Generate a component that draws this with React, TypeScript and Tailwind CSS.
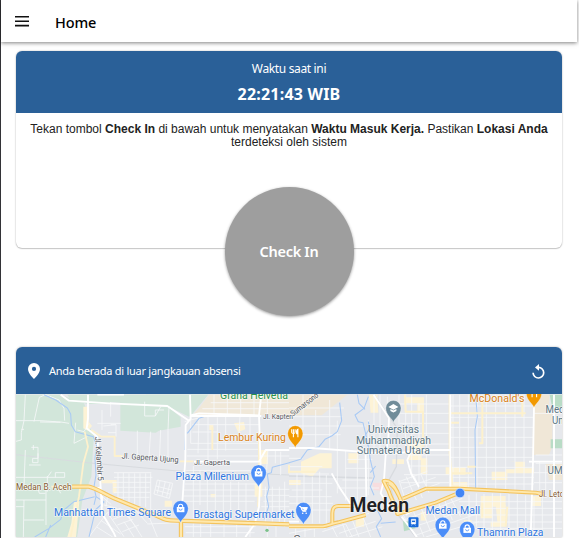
import React from "react";

const west = {
  greens: [
    "M6 14H140L210 40L222 70L215 100L240 130L232 260L205 330L190 441H6Z",
    "M160 14H582L555 45L525 80L460 48L290 36V100H250L222 85V42L170 30Z",
    "M319 36L460 48L500 82V110L435 122L425 128L319 122Z",
    "M395 14H582L530 78L440 40Z",
  ],
  lands: [
    "M222 42H292V110H252L222 92Z",
    "M243 120L258 130L262 300L270 441H190L208 330L240 262Z",
  ],
  sand: ["M585 14H826V76H535L555 55Z"],
  cream: [
    "M208 50H224V95L234 108L222 122L208 115Z",
    "M262 270H308V310H296V280H262Z",
    "M180 335H196L186 441H160L172 400Z",
    "M660 100L690 96L694 118L672 126Z",
    "M735 180H762V222H738Z",
    "M722 280H745V320H722Z",
    "M586 105H598V120H586ZM452 332H474V350H452ZM590 312H606V322H590Z",
  ],
  minor: [
    "M6 92H78L140 96L165 100M34 14L30 92L22 128V150L6 154M30 118L22 118M60 95L76 22L95 14M78 96L140 97M95 14L135 30L150 55L152 92",
    "M52 172H72V205H56V218H72V190M58 180V165M45 225H80M34 180L30 290M6 262H100L112 245M100 258V305M100 262H152V248H124V262M30 330H96M96 292V405M6 330H30L28 441M6 350H30M30 390H90",
    "M70 290L76 310H94M130 290L140 310M264 60V120M290 36V80M290 104H306V140M268 108L306 104M306 128H282",
    "M392 35V78H424V60H450M424 78L440 50M465 50L462 122M440 120L436 215M462 122V215M512 95L560 82M320 100H250M370 122V200M410 125L405 200",
    "M300 248H412M300 262H415M295 277H410M298 292H406M300 307H408M308 322H406M312 248V325M328 248V330M345 250V336M362 250V342M378 250V348M395 250V352M410 250V358",
    "M430 270L476 280L466 325L420 312ZM438 272L430 310M454 275L444 318M468 280L458 320M426 288L472 300M424 300L468 312",
    "M225 441L280 368L330 440M248 411L296 441M262 392L320 432M280 368L320 355L370 415M296 388L340 372M310 405L356 388M325 425L375 405M340 372L384 441M356 350L400 400M330 395L360 441M405 380L430 441M400 402L495 398",
    "M530 76V160M555 82L552 190M582 80V215M610 82V208M635 80V182M678 80L674 150M708 80V152M535 104H735M535 126H610M530 160H738M520 178H735M518 198H826M762 178L758 240M784 180V220M800 185V255",
    "M515 242H720M512 282H728M510 300H722M508 318H725M507 334H722M538 228V390M558 240V345M580 270V385M604 275V390M628 280V385M650 275V388M674 275V385M696 280V388",
    "M742 298H826M750 316H826M748 334H826M742 350H826M754 290V400M775 290V400M796 290V400M812 275V410M512 410H725M515 428H722M538 400V441M560 400V441M590 400V441M630 400V441M668 400V441M708 400V441M760 410V441M786 410V441",
    "M600 14V70M640 14V74M680 20V75M720 14V76M760 22V76M590 38H826M565 56H826",
    "M270 345L310 355M265 320L292 344M282 310L276 350M225 100L210 125L190 120M185 98L180 160M220 140L180 160",
  ],
  rivers: [
    "M90 14L125 30L160 54L170 72L172 105L184 125L238 140L248 168L243 205L246 255L240 290L246 320L240 345",
    "M62 441L105 415L140 388L150 360L180 335L242 320M95 441L110 405M246 320L270 336L244 360L235 400L225 441",
    "M520 130L555 85L582 76M510 260L508 300M515 125L512 180M826 218L775 232L772 248L760 252L765 292L758 320L764 350L750 388",
  ],
  cream2: [
    "M232 120L262 140H302V198H326M112 290H174M212 125L222 170L208 220L195 320L180 390L170 441M498 214H538M595 112V180M735 122V252M735 275L732 350",
  ],
  major: [
    "M140 14L165 32L285 40L460 48L525 92M528 14L530 86L515 105L514 210L504 352M250 14H330M528 78H742M222 14V85L218 115L250 140L260 292L264 370L300 430L305 441",
    "M530 76L555 70L735 76L742 14M735 76L740 230L735 350L722 402L694 441M240 300L258 292M540 215H735L755 180H826M264 318L264 350",
  ],
  highways: [
    "M174 290H224C245 294 268 310 300 325L430 378C447 386 454 392 486 392L826 403",
    "M501 394V441",
  ],
};

const east = {
  sand: [
    "M0 14H175L98 76H0Z",
    "M734 14H782L778 68H790V170L780 195H730Z",
    "M770 222H819V270H780Z",
  ],
  greens: ["M782 14H819V55H790Z", "M785 148H819V175H785Z", "M342 394H370L380 415L345 424Z"],
  cream: [
    "M36 215L92 190H128V235H92L70 260L36 250Z",
    "M240 14H265L268 68H245Z",
    "M350 22H405V70H385V40H345Z",
    "M355 150H398V205H415V252H395V210H358Z",
    "M178 190H208V220H178Z",
    "M660 215H708V235H735V250H650V238H678V216Z",
    "M608 245H655V270H608Z",
    "M575 318H650V350H610V385H575Z",
    "M620 345H650V410H605V395H625Z",
    "M470 232H530V254H470Z",
    "M395 365H412V392H395Z",
    "M200 380H225V410H200ZM0 270H35V285H0ZM310 208H345V222H310Z",
    "M525 390H548V410H525ZM730 318H756V348H730ZM485 276H535V294H485Z",
  ],
  minor: [
    "M0 54H165M0 80H160M0 108H230M0 134H155M42 14V120M80 60V170M122 30V178M145 92V310M170 180V332M205 180V342M238 90V315M175 208H250M170 235H248M160 270H252M145 294H270",
    "M0 205H40M0 230H100M0 252H120M0 280H130M8 300H100M0 320H128M0 340H132M0 360H130M24 250V390M45 250V350M70 260V400M92 245V400M112 255V402",
    "M255 14V180M273 14V185M295 20V80M330 14V104M350 14V190M368 14V265M390 40V280M412 14V300M330 42H482M332 70H482M332 100H482M368 130H482M364 162H482M365 195H482M358 228H482M345 254H480M335 278H480",
    "M492 14V278M512 14V292M538 14V300M564 14V302M592 14V305M620 14V306M650 14V308M678 14V310M705 14V310M482 48H735M482 82H735M482 112H735M482 142H735M482 172H735M482 202H735M482 232H735M482 262H735M490 282H735",
    "M735 70H819M740 195H819M740 220H819M735 248H819M735 278H819M795 70V441M752 215V300M770 225V300",
    "M330 270L352 340M352 260L382 330M374 252L400 324M396 254L420 308M330 275L415 244M342 296L440 262M350 315L452 280",
    "M340 370L380 441M370 356L405 441M395 350L425 425M420 340L450 410M445 330L475 400M465 325L490 390M480 315L515 380M345 390L520 325M360 415L545 355M382 435L560 373M410 441L570 395",
    "M540 315V400M562 310V410M585 312V441M610 310V441M635 310V441M660 312V441M685 312V441M710 316V441M735 320V441M760 320V441M510 335H819M520 355H819M535 375H819M535 396H819M550 415H819",
    "M0 430L110 410L240 370M130 412L145 441M160 400L175 441M190 390L210 441M220 376L245 441M0 415H110M20 410V441M48 410V441M76 410V441M150 430L260 394M180 441L280 410M100 425L170 402L190 441",
  ],
  rivers: [
    "M152 38L158 92L145 125L128 138L108 148L90 170L55 180L35 208L0 218M238 20L225 55L198 75L208 95L222 98L238 165L244 210L256 260L244 290L255 316",
    "M205 14L210 40L228 58M238 95L242 115L226 140L238 170M244 248L260 228M560 14L565 80L558 120L560 300M265 360L278 386L262 410L275 441M275 400L320 396",
  ],
  cream2: [
    "M482 14V190L490 285M482 70H710M482 98H510M580 14V160H570M700 14V80M0 245H80M535 230H560M348 14L350 65H402V170M0 225V250M655 350L650 410M490 250H550M580 340V380",
  ],
  major: [
    "M0 174H70L282 190H330L380 180H482M254 14L300 84L298 145L290 195L285 270M735 50L732 215L725 441M795 14V441M338 380L384 441M128 250L155 298L185 342M484 14V295",
    "M0 395H30M350 374L371 362M370 175L355 210L366 250L390 290M720 215H819M285 270L275 310L300 350M230 195L232 320",
  ],
  highways: [
    "M0 409H102C120 407 122 402 148 397L230 375M130 402V370Q130 348 148 348H195",
    "M325 372L440 338L512 308M342 326L412 296H512L740 308L765 312",
    "M284 273C300 269 315 284 325 305L338 337L325 372C323 347 305 326 300 305ZM300 280C318 290 323 305 336 330",
  ],
};

const Menu = () => (
  <svg className="block size-4" viewBox="0 0 16 16" fill="#111">
    <path d="M1 2h14v1.6H1zM1 6.4h14V8H1zM1 10.8h14v1.6H1z" />
  </svg>
);

type PinProps = { x: number; y: number; color: string; kind: "bag" | "cart" | "food" | "school" };

const MapPin = ({ x, y, color, kind }: PinProps) => (
  <g transform={`translate(${x} ${y})`}>
    <path
      d="M0 14.5C-.8 10.5-7.6 7.5-7.6 0a7.6 7.6 0 0 1 15.2 0C7.6 7.5.8 10.5 0 14.5Z"
      fill={color}
      stroke="#fff"
      strokeOpacity=".55"
      strokeWidth=".5"
    />
    {kind === "bag" && (
      <g>
        <path d="M-3.8-1.3h7.6v5.2h-7.6z" fill="#fff" />
        <path d="M-2.1-1v-1a2.1 2.1 0 0 1 4.2 0v1" fill="none" stroke="#fff" strokeWidth="1.1" />
        <path d="M-1.6.3a1.6 1.6 0 0 0 3.2 0" fill="none" stroke={color} strokeWidth=".8" />
      </g>
    )}
    {kind === "cart" && (
      <g>
        <path d="M-4.3-3.5h1.6l2 4.8h3.6M-2.4-2.5h6.4L2.9.2h-4.3z" fill="#fff" stroke="#fff" strokeWidth=".9" />
        <circle cx="-.7" cy="3.2" r=".8" fill="#fff" />
        <circle cx="2.8" cy="3.2" r=".8" fill="#fff" />
      </g>
    )}
    {kind === "food" && (
      <g fill="none" stroke="#fff">
        <path d="M-3.6-4v2.8q0 1.4 1.7 1.4t1.7-1.4V-4M-1.9-4v8" strokeWidth="1.1" />
        <path d="M2.6 4v-8C1.2-3.5 1.1-1.5 1.4.3h1.2" fill="#fff" strokeWidth="1.1" />
      </g>
    )}
    {kind === "school" && (
      <path d="M-5-1.1 0-3.9l5 2.8L0 1.7zM-3 .9 0 2.6 3 .9v2L0 4.4l-3-1.5z" fill="#fff" />
    )}
  </g>
);

type LabelProps = {
  x: number;
  y: number;
  w: number;
  size: number;
  color: string;
  children: string;
  rotate?: number;
  weight?: number;
};

const Label = ({ x, y, w, size, color, children, rotate = 0, weight = 400 }: LabelProps) => (
  <text
    x={x}
    y={y}
    fontSize={size}
    fontWeight={weight}
    fill={color}
    textLength={w}
    lengthAdjust="spacingAndGlyphs"
    transform={`rotate(${rotate} ${x} ${y})`}
    stroke="#fff"
    strokeWidth="1.6"
    strokeOpacity=".6"
    strokeLinejoin="round"
    paintOrder="stroke"
  >
    {children}
  </text>
);

const Lines = ({ paths, color, width }: { paths: string[]; color: string; width: number }) => (
  <g fill="none" stroke={color} strokeWidth={width} strokeLinejoin="round">
    {paths.map((d) => (
      <path key={d} d={d} />
    ))}
  </g>
);

const Areas = ({ paths, color }: { paths: string[]; color: string }) => (
  <g fill={color}>
    {paths.map((d) => (
      <path key={d} d={d} />
    ))}
  </g>
);

const CityMap = () => (
  <svg className="block h-[143px] w-full font-[Roboto,sans-serif]" viewBox="16 394 546 143">
    <path d="M16 394h546v143H16z" fill="#e6e8ec" />
    <g transform="translate(14 390) scale(.33333)">
      <Areas paths={west.greens} color="#d2e6da" />
      <Areas paths={west.lands} color="#e6e8ec" />
      <Areas paths={west.sand} color="#f0e8d9" />
      <Areas paths={west.cream} color="#fdf3d6" />
      <path d="M6 194L240 220L480 242L826 255" fill="none" stroke="#d8dbdf" strokeWidth="3" />
      <Lines paths={west.minor} color="#f6f8f9" width={2.5} />
      <Lines paths={west.rivers} color="#a9caf5" width={3.2} />
      <Lines paths={west.cream2} color="#fdf1cd" width={5.5} />
      <Lines paths={west.major} color="#fff" width={5.5} />
      <Lines paths={west.highways} color="#f4c35d" width={13} />
      <Lines paths={west.highways} color="#ffe8ab" width={6.5} />
      <circle cx="759" cy="421" r="5" fill="#7bc18a" />
    </g>
    <g transform="translate(289 390) scale(.33333)">
      <Areas paths={east.sand} color="#f0e7d7" />
      <Areas paths={east.cream} color="#fdf3d6" />
      <Areas paths={["M250 278L285 278L282 302L255 300Z"]} color="#f7dddf" />
      <path d="M0 258L250 264M255 14L325 115L322 230L300 270L325 372L380 441" fill="none" stroke="#d8dbdf" strokeWidth="4" />
      <Lines paths={east.minor} color="#f6f8f9" width={2.5} />
      <Areas paths={east.greens} color="#b9dcc6" />
      <Lines paths={east.rivers} color="#a9caf5" width={3.2} />
      <Lines paths={east.cream2} color="#fdf1cd" width={6} />
      <Lines paths={east.major} color="#fff" width={5.5} />
      <Lines paths={east.highways} color="#f4c35d" width={12} />
      <Lines paths={east.highways} color="#ffe8ab" width={5.5} />
    </g>

    <Label x={220} y={398.5} w={68} size={11} color="#28934b">Graha Helvetia</Label>
    <Label x={263} y={419.3} w={30} size={8} color="#55585d">Jl. Kapten</Label>
    <Label x={293} y={416.5} w={33} size={8} color="#55585d" rotate={-38}>Sumarsono</Label>
    <Label x={218} y={441.3} w={68} size={11} color="#d98218">Lembur Kuring</Label>
    <Label x={469.5} y={402} w={55} size={11} color="#d98218">McDonald's</Label>
    <Label x={368} y={433} w={51} size={10.5} color="#5b7683">Universitas</Label>
    <Label x={356} y={443.6} w={75} size={10.5} color="#5b7683">Muhammadiyah</Label>
    <Label x={357} y={454} w={73} size={10.5} color="#5b7683">Sumatera Utara</Label>
    <Label x={545.5} y={413} w={19} size={10.5} color="#5b7683">Med</Label>
    <Label x={552} y={423.5} w={14} size={10.5} color="#5b7683">Uni</Label>
    <Label x={547.5} y={473.5} w={15} size={10.5} color="#5b7683">UM</Label>
    <Label x={121.5} y={458.5} w={57} size={8} color="#55585d" rotate={4}>Jl. Gaperta Ujung</Label>
    <Label x={194} y={464.5} w={36} size={8} color="#55585d">Jl. Gaperta</Label>
    <Label x={95} y={437} w={44} size={8} color="#55585d" rotate={86}>Jl. Kelambir 5</Label>
    <Label x={16} y={490.3} w={55.5} size={8.5} color="#885c31">Medan B. Aceh</Label>
    <Label x={175.5} y={480} w={73.5} size={11} color="#2f76df">Plaza Millenium</Label>
    <Label x={54} y={515.8} w={117} size={11} color="#2f76df">Manhattan Times Square</Label>
    <Label x={193.5} y={517.7} w={101} size={11} color="#2f76df">Brastagi Supermarket</Label>
    <Label x={425.5} y={513.7} w={54.5} size={11} color="#2f76df">Medan Mall</Label>
    <Label x={477} y={536} w={66.5} size={11} color="#2f76df">Thamrin Plaza</Label>
    <Label x={349.5} y={511.5} w={59.5} size={20} weight={600} color="#202124">Medan</Label>
    <Label x={539} y={496.5} w={25} size={8.5} color="#885c31">Jl. Letd</Label>
    <Label x={293.5} y={543} w={7} size={10} color="#55585d">S</Label>

    <MapPin x={295.3} y={433.3} color="#f29900" kind="food" />
    <MapPin x={534} y={393.2} color="#f29900" kind="food" />
    <MapPin x={393.4} y={408} color="#718c99" kind="school" />
    <MapPin x={258.6} y={472.5} color="#4b8df8" kind="bag" />
    <MapPin x={180.6} y={508.3} color="#4b8df8" kind="bag" />
    <MapPin x={303.4} y={510} color="#4b8df8" kind="cart" />
    <MapPin x={442.8} y={524.8} color="#4b8df8" kind="bag" />
    <MapPin x={467.2} y={529} color="#4b8df8" kind="bag" />
    <rect x="408.5" y="517.2" width="10" height="10" rx="1.2" fill="#1769da" />
    <path d="M411.3 519.2h4.4v4.7h-4.4zM411.4 525.6l1-1.4M415.6 525.6l-1-1.4" fill="#fff" stroke="#fff" strokeWidth=".5" />
    <path d="M412 520.6h3v1.5h-3z" fill="#1769da" />
    <circle cx="460" cy="493" r="4.8" fill="#4285f4" stroke="#e8f0fe" strokeWidth=".7" />
  </svg>
);

export default function App() {
  return (
    <div className="h-[538px] w-[579px] overflow-hidden bg-white font-['Noto_Sans',sans-serif] text-white">
      <div className="h-full w-[577px] border-l border-[#333337]">
        <header className="flex h-[42px] items-center bg-white pl-[13px] pt-[2px] text-black shadow-[0_1px_4px_rgba(0,0,0,.5)]">
          <Menu />
          <h1 className="ml-[25px] text-[14.5px] font-medium leading-5 tracking-[-0.15px]">Home</h1>
        </header>
        <main className="w-[561px] pl-[15px] pt-[9px]">
          <section className="h-[197px] rounded-[6px] bg-white shadow-[0_0_2px_rgba(0,0,0,.28),0_1px_1px_rgba(0,0,0,.16)]">
            <div className="flex h-[62px] flex-col items-center rounded-t-[6px] bg-[#2a6098] pt-[10px]">
              <p className="text-xs leading-4 tracking-[-0.35px]">Waktu saat ini</p>
              <p className="mt-[5px] text-base font-bold leading-6 tracking-[0.2px]">22:21:43 WIB</p>
            </div>
            <p className="px-2 pt-[10px] text-center font-['Liberation_Sans',sans-serif] text-xs leading-[13px] text-[#222]">
              Tekan tombol <b>Check In</b> di bawah untuk menyatakan <b>Waktu Masuk Kerja.</b> Pastikan <b>Lokasi Anda</b> terdeteksi oleh sistem
            </p>
            <button className="mx-auto mt-[38px] flex size-[129px] items-center justify-center rounded-full bg-[#9e9e9e] text-[14.5px] font-semibold tracking-[-0.3px] shadow-[0_1px_3px_rgba(0,0,0,.4)]">
              Check In
            </button>
          </section>
          <section className="mt-[99px] overflow-hidden rounded-t-[6px] shadow-[0_0_2px_rgba(0,0,0,.35)]">
            <div className="flex h-[47px] items-center bg-[#2a6098] pl-[12px] pr-[17px] pt-px">
              <svg className="h-4 w-3" viewBox="0 0 12 16">
                <path d="M6 0a6 6 0 0 0-6 6c0 4.5 6 10 6 10s6-5.5 6-10a6 6 0 0 0-6-6Zm0 3.8a2.1 2.1 0 1 1 0 4.2 2.1 2.1 0 0 1 0-4.2Z" fill="#fff" />
              </svg>
              <p className="ml-[9px] text-[11px] leading-4 tracking-[-0.26px]">Anda berada di luar jangkauan absensi</p>
              <svg className="ml-auto h-[15px] w-[13px]" viewBox="0 0 13 15" fill="none">
                <path d="M6.5 3.4a5.3 5.3 0 1 1-5.4 5.4" stroke="#fff" strokeWidth="1.7" />
                <path d="M7 0v6.8L3 3.4z" fill="#fff" />
              </svg>
            </div>
            <CityMap />
          </section>
        </main>
      </div>
    </div>
  );
}
